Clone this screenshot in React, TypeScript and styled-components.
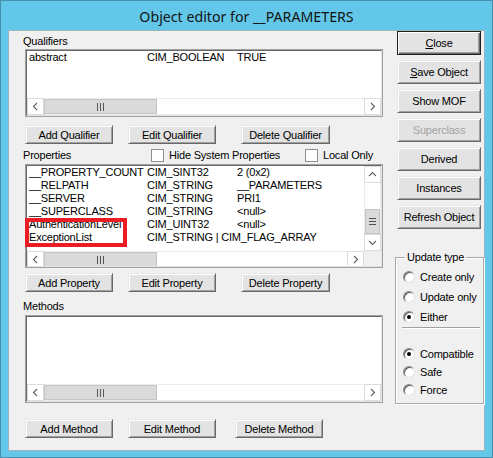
import styled, { createGlobalStyle } from "styled-components";

const GlobalStyle = createGlobalStyle`
  html, body { margin: 0; padding: 0; }
  body {
    font-family: "Liberation Sans", Arial, sans-serif;
    font-size: 11px;
    letter-spacing: -0.2px;
    color: #000;
    background: #62c7e8;
  }
  * { box-sizing: border-box; }
`;

type Dir = "left" | "right" | "up" | "down";

const chevrons: Record<Dir, string> = {
  left: "9,4 5.5,7.5 9,11",
  right: "6,4 9.5,7.5 6,11",
  up: "4,9 7.5,5.5 11,9",
  down: "4,6 7.5,9.5 11,6",
};

function Chevron({ dir }: { dir: Dir }) {
  return (
    <svg width="15" height="15" viewBox="0 0 15 15">
      <polyline points={chevrons[dir]} fill="none" stroke="#606060" strokeWidth="1.1" />
    </svg>
  );
}

const qualifiers = [["abstract", "CIM_BOOLEAN", "TRUE"]];

const properties = [
  ["__PROPERTY_COUNT", "CIM_SINT32", "2 (0x2)"],
  ["__RELPATH", "CIM_STRING", "__PARAMETERS"],
  ["__SERVER", "CIM_STRING", "PRI1"],
  ["__SUPERCLASS", "CIM_STRING", "<null>"],
  ["AuthenticationLevel", "CIM_UINT32", "<null>"],
  ["ExceptionList", "CIM_STRING | CIM_FLAG_ARRAY", ""],
];

export default function App() {
  return (
    <>
      <GlobalStyle />
      <Window>
        <TitleBar>Object editor for __PARAMETERS</TitleBar>
        <Client>
          <LeftPane>
            <SectionLabel $top={4}>Qualifiers</SectionLabel>
            <ListFrame $h={68} $top={1}>
              <ListInner>
                <Rows>
                  {qualifiers.map((r) => (
                    <Row key={r[0]}>
                      <span>{r[0]}</span>
                      <span>{r[1]}</span>
                      <span>{r[2]}</span>
                    </Row>
                  ))}
                </Rows>
                <HScroll />
              </ListInner>
            </ListFrame>
            <ButtonRow $top={8}>
              <Btn>Add Qualifier</Btn>
              <Btn>Edit Qualifier</Btn>
              <Btn $shift={10} $w={89}>Delete Qualifier</Btn>
            </ButtonRow>

            <PropHeader>
              <span>Properties</span>
              <CheckLabel>
                <CheckBox />
                Hide System Properties
              </CheckLabel>
              <CheckLabel>
                <CheckBox />
                Local Only
              </CheckLabel>
            </PropHeader>
            <ListFrame $h={104} $top={2}>
              <ListInner $withV>
                <Rows>
                  {properties.map((r) => (
                    <Row key={r[0]}>
                      <span>{r[0]}</span>
                      <span>{r[1]}</span>
                      <span>{r[2]}</span>
                    </Row>
                  ))}
                </Rows>
                <VScroll>
                  <ArrowBtn>
                    <Chevron dir="up" />
                  </ArrowBtn>
                  <VTrack>
                    <Thumb $vertical>
                      <Grip $vertical />
                    </Thumb>
                  </VTrack>
                  <ArrowBtn>
                    <Chevron dir="down" />
                  </ArrowBtn>
                </VScroll>
                <HScroll />
                <Corner />
              </ListInner>
              <Highlight />
            </ListFrame>
            <ButtonRow $top={5}>
              <Btn>Add Property</Btn>
              <Btn>Edit Property</Btn>
              <Btn $shift={10} $w={89}>Delete Property</Btn>
            </ButtonRow>

            <SectionLabel $top={8}>Methods</SectionLabel>
            <ListFrame $h={88} $top={2}>
              <ListInner>
                <Rows />
                <HScroll />
              </ListInner>
            </ListFrame>
            <ButtonRow $top={16}>
              <Btn>Add Method</Btn>
              <Btn>Edit Method</Btn>
              <Btn $shift={4}>Delete Method</Btn>
            </ButtonRow>
          </LeftPane>

          <RightPane>
            <SideButtons>
              <Btn $w={84} $h={24} $primary>
                <u>C</u>lose
              </Btn>
              <Btn $w={84} $h={24}>
                <u>S</u>ave Object
              </Btn>
              <Btn $w={84} $h={24}>Show MOF</Btn>
              <Btn $w={84} $h={24} disabled>
                Superclass
              </Btn>
              <Btn $w={84} $h={24}>Derived</Btn>
              <Btn $w={84} $h={24}>Instances</Btn>
              <Btn $w={84} $h={24}>Refresh Object</Btn>
            </SideButtons>

            <Group>
              <legend>Update type</legend>
              <RadioRow $h={20}>
                <Radio />
                Create only
              </RadioRow>
              <RadioRow $h={20}>
                <Radio />
                Update only
              </RadioRow>
              <RadioRow $h={20}>
                <Radio $checked />
                Either
              </RadioRow>
              <Separator />
              <RadioRow $h={18}>
                <Radio $checked />
                Compatible
              </RadioRow>
              <RadioRow $h={18}>
                <Radio />
                Safe
              </RadioRow>
              <RadioRow $h={18}>
                <Radio />
                Force
              </RadioRow>
            </Group>
          </RightPane>
        </Client>
      </Window>
    </>
  );
}

function HScroll() {
  return (
    <HBar>
      <ArrowBtn>
        <Chevron dir="left" />
      </ArrowBtn>
      <HTrack>
        <Thumb>
          <Grip />
        </Thumb>
      </HTrack>
      <ArrowBtn>
        <Chevron dir="right" />
      </ArrowBtn>
    </HBar>
  );
}

const Window = styled.div`
  width: 493px;
  height: 458px;
  display: flex;
  flex-direction: column;
  padding: 0 7px 6px;
  background: #62c7e8;
  border: 1px solid #4a8fae;
`;

const TitleBar = styled.div`
  height: 29px;
  display: flex;
  align-items: center;
  justify-content: center;
  padding-top: 1px;
  font-family: "Noto Sans", "Open Sans", sans-serif;
  font-size: 14.2px;
  letter-spacing: 0;
  color: #141414;
`;

const Client = styled.div`
  flex: 1;
  display: flex;
  gap: 14px;
  padding: 0 3px 0 14px;
  background: #f0f0f0;
  border: 1px solid #9fb3bd;
`;

const LeftPane = styled.div`
  width: 360px;
  display: flex;
  flex-direction: column;
`;

const RightPane = styled.div`
  width: 84px;
  display: flex;
  flex-direction: column;
`;

const SectionLabel = styled.div<{ $top: number }>`
  margin-top: ${(p) => p.$top}px;
  line-height: 13px;
  height: 13px;
`;

const ListFrame = styled.div<{ $h: number; $top: number }>`
  position: relative;
  margin: ${(p) => p.$top}px 0 0 2px;
  width: 358px;
  height: ${(p) => p.$h}px;
  border: 1px solid #a0a0a0;
`;

const ListInner = styled.div<{ $withV?: boolean }>`
  height: 100%;
  display: grid;
  grid-template-columns: ${(p) => (p.$withV ? "1fr 17px" : "1fr")};
  grid-template-rows: 1fr 17px;
  background: #fff;
  border-top: 1px solid #696969;
  border-left: 1px solid #696969;
  border-right: 1px solid #e3e3e3;
  border-bottom: 1px solid #e3e3e3;
  overflow: hidden;
`;

const Rows = styled.div`
  overflow: hidden;
  padding-left: 2px;
`;

const Row = styled.div`
  display: grid;
  grid-template-columns: 118px 90px auto;
  height: 13px;
  line-height: 13px;
  white-space: nowrap;
`;

const HBar = styled.div`
  display: flex;
  min-width: 0;
  background: #fff;
`;

const ArrowBtn = styled.div`
  width: 17px;
  height: 17px;
  flex: none;
  display: flex;
  align-items: center;
  justify-content: center;
  background: #fff;
  border: 1px solid #dcdcdc;
`;

const HTrack = styled.div`
  flex: 1;
  display: flex;
  border-top: 1px solid #ececec;
  border-bottom: 1px solid #ececec;
`;

const VScroll = styled.div`
  display: flex;
  flex-direction: column;
  background: #fff;
`;

const VTrack = styled.div`
  flex: 1;
  display: flex;
  flex-direction: column;
  padding-top: 26px;
  border-left: 1px solid #ececec;
  border-right: 1px solid #ececec;
`;

const Thumb = styled.div<{ $vertical?: boolean }>`
  width: ${(p) => (p.$vertical ? "100%" : "113px")};
  height: ${(p) => (p.$vertical ? "25px" : "100%")};
  display: flex;
  align-items: center;
  justify-content: center;
  background: #dadada;
  border: 1px solid #c4c4c4;
`;

const Grip = styled.span<{ $vertical?: boolean }>`
  width: 7px;
  height: ${(p) => (p.$vertical ? "7px" : "8px")};
  background: linear-gradient(
    ${(p) => (p.$vertical ? "to bottom" : "to right")},
    #555 0 1px,
    transparent 1px 3px,
    #555 3px 4px,
    transparent 4px 6px,
    #555 6px 7px
  );
`;

const Corner = styled.div`
  background: #f0f0f0;
`;

const Highlight = styled.div`
  position: absolute;
  left: -1px;
  top: 53px;
  width: 102px;
  height: 29px;
  border: 4px solid #ea1c24;
  pointer-events: none;
`;

const ButtonRow = styled.div<{ $top: number }>`
  display: flex;
  gap: 15px;
  margin: ${(p) => p.$top}px 0 0 2px;
`;

const Btn = styled.button<{ $w?: number; $h?: number; $shift?: number; $primary?: boolean }>`
  width: ${(p) => p.$w ?? 88}px;
  height: ${(p) => p.$h ?? 19}px;
  margin-left: ${(p) => p.$shift ?? 0}px;
  padding: 0;
  font: inherit;
  letter-spacing: inherit;
  color: #000;
  background: #e3e3e3;
  border: 1px solid;
  border-color: ${(p) =>
    p.$primary ? "#1e1e1e" : "#e8e8e8 #696969 #696969 #e8e8e8"};
  box-shadow: ${(p) =>
    p.$primary
      ? "inset 1px 1px 0 #fff, inset -1px -1px 0 #696969, inset -2px -2px 0 #a0a0a0"
      : "inset 1px 1px 0 #fff, inset -1px -1px 0 #a0a0a0"};

  &:disabled {
    color: #a3a3a3;
  }

  u {
    text-decoration-thickness: 1px;
  }
`;

const SideButtons = styled.div`
  display: flex;
  flex-direction: column;
  gap: 5px;
`;

const PropHeader = styled.div`
  display: grid;
  grid-template-columns: 128px 154px auto;
  align-items: center;
  height: 14px;
  margin-top: 4px;
`;

const CheckLabel = styled.label`
  display: flex;
  align-items: center;
  gap: 5px;
`;

const CheckBox = styled.span`
  width: 13px;
  height: 13px;
  background: #fff;
  border: 1px solid #8f8f8f;
`;

const Group = styled.fieldset`
  margin: 22px -3px 0 -2px;
  padding: 3px 3px 4px 7px;
  border: 1px solid #a9a9a9;
  box-shadow: 1px 1px 0 #fff, inset 1px 1px 0 #fff;

  legend {
    margin-left: 2px;
    padding: 0 2px;
    line-height: 13px;
  }
`;

const RadioRow = styled.div<{ $h: number }>`
  display: flex;
  align-items: center;
  gap: 5px;
  height: ${(p) => p.$h}px;
`;

const Radio = styled.span<{ $checked?: boolean }>`
  position: relative;
  width: 12px;
  height: 12px;
  border-radius: 50%;
  background: #fff;
  border: 1px solid;
  border-color: #8a8a8a #e3e3e3 #e3e3e3 #8a8a8a;
  box-shadow: inset 1px 1px 0 #5a5a5a;

  &::after {
    content: "";
    display: ${(p) => (p.$checked ? "block" : "none")};
    position: absolute;
    left: 3px;
    top: 3px;
    width: 4px;
    height: 4px;
    border-radius: 50%;
    background: #000;
  }
`;

const Separator = styled.div`
  margin: 0 0 16px -1px;
  height: 2px;
  border-top: 1px solid #a0a0a0;
  border-bottom: 1px solid #fff;
`;
